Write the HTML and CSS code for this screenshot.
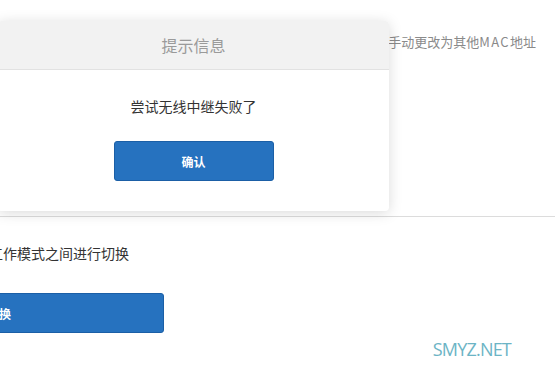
FILE: index.html
```html
<!DOCTYPE html>
<html>
<head>
<meta charset="utf-8">
<link rel="stylesheet" href="styles.css">
</head>
<body>
<div class="page">
  <div class="top-row">
    <p class="hint">可手动更改为其他<span class="latin">MAC</span>地址</p>
  </div>
  <div class="section">
    <p class="desc">在各工作模式之间进行切换</p>
    <button class="btn wide">切换</button>
  </div>
  <div class="watermark">SMYZ.NET</div>
  <div class="dialog">
    <div class="dialog-head">提示信息</div>
    <div class="dialog-body">
      <p class="msg">尝试无线中继失败了</p>
      <button class="btn confirm">确认</button>
    </div>
  </div>
</div>
</body>
</html>
```
FILE: styles.css
```css
* { box-sizing: border-box; }
html, body { margin: 0; padding: 0; }
body {
  font-family: "Noto Sans CJK SC", "Noto Sans", sans-serif;
  background: #fff;
  overflow: hidden;
}
.page {
  position: relative;
  width: 555px;
  height: 369px;
  overflow: hidden;
}
.top-row {
  height: 217px;
  border-bottom: 1px solid #dcdcdc;
  display: flex;
  justify-content: flex-end;
  padding: 32px 19px 0 0;
}
.hint {
  margin: 0;
  font-size: 13px;
  line-height: 20px;
  color: #8a8a8a;
}
.latin {
  letter-spacing: 1.4px;
}
.section {
  padding-top: 26px;
  display: flex;
  flex-direction: column;
  align-items: flex-start;
}
.desc {
  margin: 0 0 0 -39px;
  font-size: 14px;
  line-height: 20px;
  color: #333;
}
.btn {
  font-family: "Noto Sans CJK SC", sans-serif;
  background: #2672bf;
  border: 1px solid #1b5fa6;
  border-radius: 3px;
  color: #fff;
  font-size: 12px;
  font-weight: bold;
  height: 40px;
  padding: 0;
}
.wide {
  margin-top: 30px;
  margin-left: -166px;
  width: 330px;
}
.watermark {
  position: absolute;
  right: 44px;
  bottom: 8px;
  font-family: "Open Sans", sans-serif;
  font-size: 18px;
  color: #6cb4c5;
  letter-spacing: -0.8px;
}
.dialog {
  position: absolute;
  left: -2px;
  top: 21px;
  width: 391px;
  height: 190px;
  background: #fff;
  border-radius: 4px;
  box-shadow: 0 2px 14px rgba(0, 0, 0, 0.15);
  overflow: hidden;
}
.dialog-head {
  height: 49px;
  background: #f2f2f2;
  border-bottom: 1px solid #e2e2e2;
  display: flex;
  align-items: center;
  justify-content: center;
  font-size: 16px;
  color: #9a9a9a;
}
.dialog-body {
  display: flex;
  flex-direction: column;
  align-items: center;
  padding-top: 26px;
}
.msg {
  margin: 0;
  font-size: 14px;
  line-height: 20px;
  color: #333;
}
.confirm {
  margin-top: 25px;
  width: 160px;
}
```
